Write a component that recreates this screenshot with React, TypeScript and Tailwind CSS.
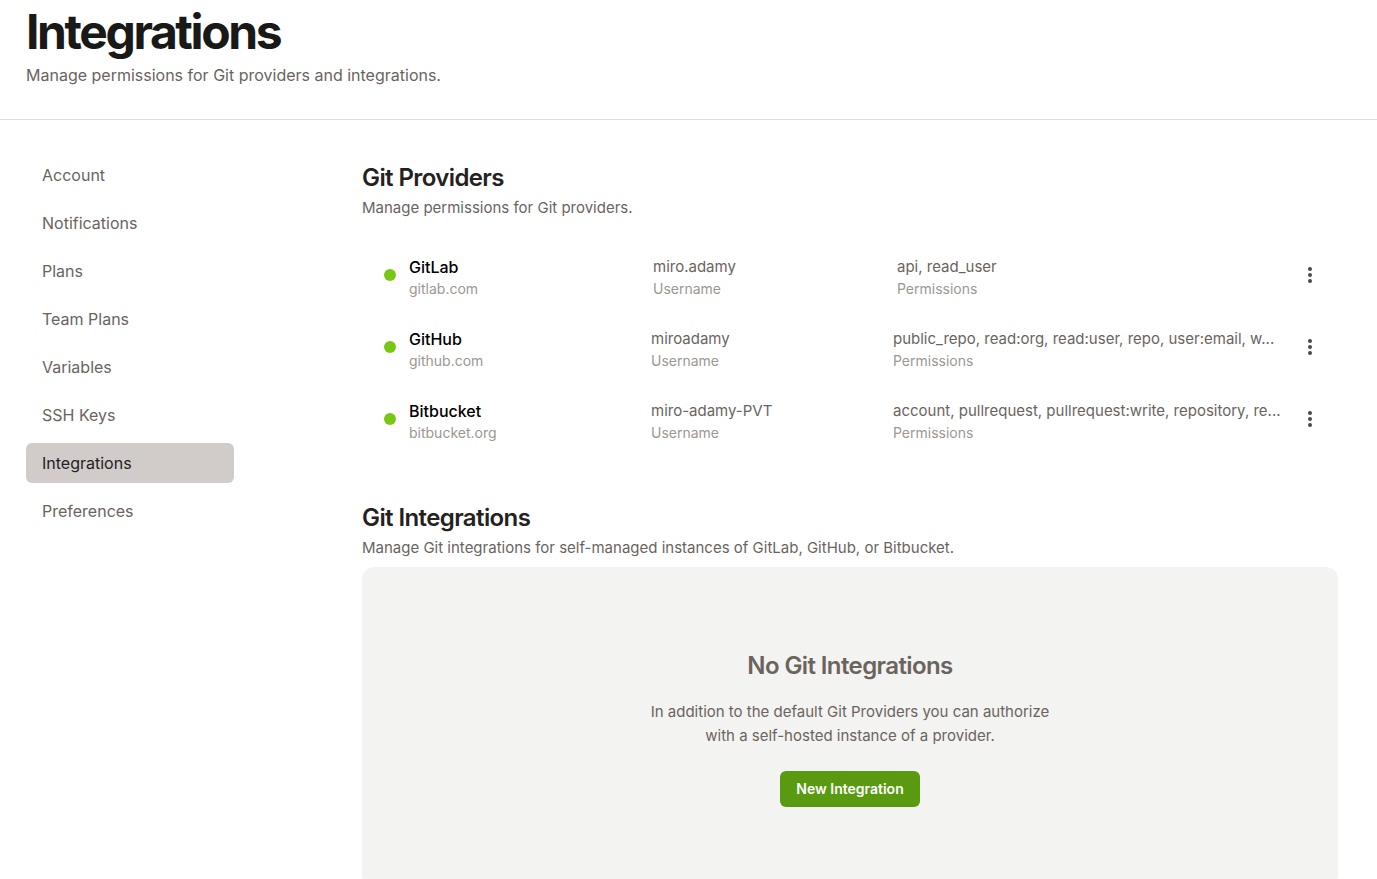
const nav = ["Account", "Notifications", "Plans", "Team Plans", "Variables", "SSH Keys", "Integrations", "Preferences"];

const providers = [
  { name: "GitLab", host: "gitlab.com", user: "miro.adamy", scopes: "api, read_user", wide: false },
  { name: "GitHub", host: "github.com", user: "miroadamy", scopes: "public_repo, read:org, read:user, repo, user:email, w...", wide: true },
  { name: "Bitbucket", host: "bitbucket.org", user: "miro-adamy-PVT", scopes: "account, pullrequest, pullrequest:write, repository, re...", wide: true },
];

function MoreIcon() {
  return (
    <svg width="4" height="16" viewBox="0 0 4 16" fill="#4f4a46" aria-hidden="true">
      <circle cx="2" cy="2" r="2" />
      <circle cx="2" cy="8" r="2" />
      <circle cx="2" cy="14" r="2" />
    </svg>
  );
}

export default function App() {
  return (
    <div className="min-h-screen bg-white font-['Inter',sans-serif] text-base text-[#6b645e]">
      <header className="border-b border-[#dedede] px-[26px] pt-2 pb-8">
        <h1 className="text-5xl leading-[48px] font-bold tracking-tighter text-[#191917]">Integrations</h1>
        <p className="mt-[7px] leading-6">Manage permissions for Git providers and integrations.</p>
      </header>
      <div className="flex pt-[35px] pr-[39px] pl-[26px]">
        <nav className="w-[208px] shrink-0">
          <ul className="space-y-2">
            {nav.map((item) => (
              <li key={item}>
                <a
                  href="#"
                  className={
                    item === "Integrations"
                      ? "block rounded-md bg-[#d1ccc9] px-4 py-2 leading-6 text-[#24211f]"
                      : "block rounded-md px-4 py-2 leading-6"
                  }
                >
                  {item}
                </a>
              </li>
            ))}
          </ul>
        </nav>
        <main className="ml-32 min-w-0 flex-1 pt-[7px] text-[15px]">
          <section>
            <h2 className="text-2xl leading-8 font-semibold tracking-tight text-[#24211f]">Git Providers</h2>
            <p className="mt-0.5 leading-6">Manage permissions for Git providers.</p>
            <div className="mt-[19px]">
              {providers.map((p) => (
                <div key={p.name} className="flex h-[72px] items-center pr-[18px] pl-[22px]">
                  <span className="h-3 w-3 shrink-0 rounded-full bg-[#79c714]" />
                  <div className={p.wide ? "ml-[13px] w-[242px] shrink-0 pt-1" : "ml-[13px] w-[244px] shrink-0 pt-1"}>
                    <p className="text-base leading-6 font-medium text-black">{p.name}</p>
                    <p className="text-sm leading-5 text-[#9d9792]">{p.host}</p>
                  </div>
                  <div className={p.wide ? "w-[242px] shrink-0 pt-1" : "w-[244px] shrink-0 pt-1"}>
                    <p className="leading-6">{p.user}</p>
                    <p className="text-sm leading-5 text-[#9d9792]">Username</p>
                  </div>
                  <div className="min-w-0 flex-1 pt-1">
                    <p className="truncate leading-6">{p.scopes}</p>
                    <p className="text-sm leading-5 text-[#9d9792]">Permissions</p>
                  </div>
                  <button type="button" aria-label={`${p.name} options`} className="ml-2.5 flex h-10 w-5 shrink-0 items-center justify-center">
                    <MoreIcon />
                  </button>
                </div>
              ))}
            </div>
          </section>
          <section className="mt-[47px]">
            <h2 className="text-2xl leading-8 font-semibold tracking-tight text-[#24211f]">Git Integrations</h2>
            <p className="mt-0.5 leading-6">Manage Git integrations for self-managed instances of GitLab, GitHub, or Bitbucket.</p>
            <div className="mt-[7px] flex flex-col items-center rounded-xl bg-[#f3f3f1] px-6 pt-[83px] pb-20 text-center">
              <h3 className="text-2xl leading-8 font-semibold tracking-tight">No Git Integrations</h3>
              <p className="mt-[18px] max-w-[420px] leading-6">In addition to the default Git Providers you can authorize with a self-hosted instance of a provider.</p>
              <button type="button" className="mt-[23px] rounded-md bg-[#599a10] px-4 py-2 text-sm leading-5 font-semibold text-white">New Integration</button>
            </div>
          </section>
        </main>
      </div>
    </div>
  );
}
